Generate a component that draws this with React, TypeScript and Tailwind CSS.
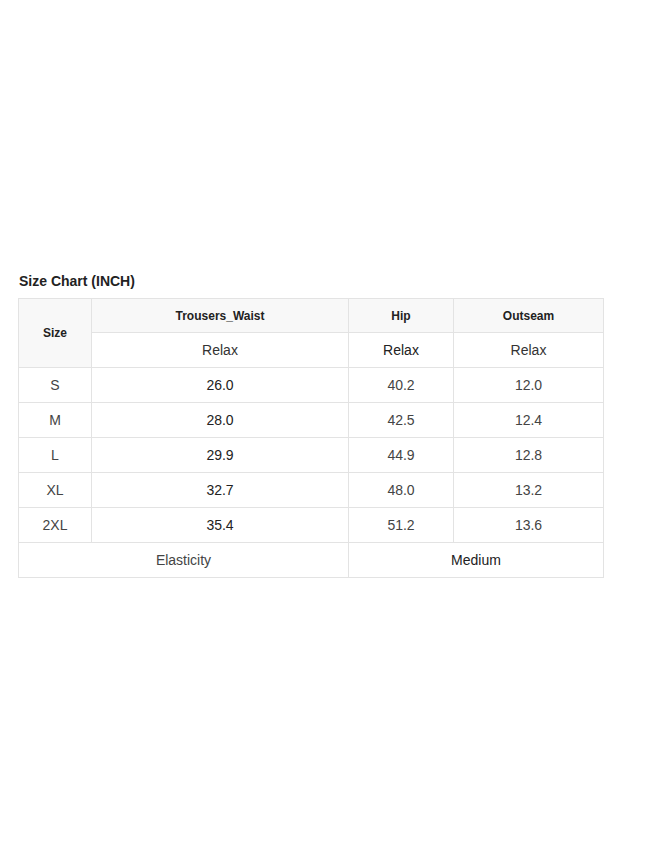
import React from "react";

const rows = [
  ["S", "26.0", "40.2", "12.0"],
  ["M", "28.0", "42.5", "12.4"],
  ["L", "29.9", "44.9", "12.8"],
  ["XL", "32.7", "48.0", "13.2"],
  ["2XL", "35.4", "51.2", "13.6"],
];

export default function App() {
  const cell = "border border-[#e3e3e3] text-center align-middle p-0";
  return (
    <div className="w-[651px] h-[868px] bg-white pt-[271px] pl-[18px]" style={{ fontFamily: '"Liberation Sans", Arial, sans-serif' }}>
      <div className="text-[14px] font-bold text-[#222] leading-[20px] pl-[1px] mb-[7px]">Size Chart (INCH)</div>
      <table className="border-collapse w-[585px] table-fixed">
        <colgroup>
          <col className="w-[73px]" />
          <col className="w-[257px]" />
          <col className="w-[105px]" />
          <col className="w-[150px]" />
        </colgroup>
        <tbody>
          <tr className="h-[34px] bg-[#f8f8f8]">
            <td rowSpan={2} className={`${cell} text-[12px] font-bold text-[#222]`}>Size</td>
            <td className={`${cell} text-[12px] font-bold text-[#222]`}>Trousers_Waist</td>
            <td className={`${cell} text-[12px] font-bold text-[#222]`}>Hip</td>
            <td className={`${cell} text-[12px] font-bold text-[#222]`}>Outseam</td>
          </tr>
          <tr className="h-[35px]">
            <td className={`${cell} text-[14px] text-[#333] bg-white`}>Relax</td>
            <td className={`${cell} text-[14px] text-[#222] bg-white`}>Relax</td>
            <td className={`${cell} text-[14px] text-[#333] bg-white`}>Relax</td>
          </tr>
          {rows.map((r) => (
            <tr key={r[0]} className="h-[35px]">
              <td className={`${cell} text-[14px] text-[#444]`}>{r[0]}</td>
              <td className={`${cell} text-[14px] text-[#222]`}>{r[1]}</td>
              <td className={`${cell} text-[14px] text-[#444]`}>{r[2]}</td>
              <td className={`${cell} text-[14px] text-[#444]`}>{r[3]}</td>
            </tr>
          ))}
          <tr className="h-[35px]">
            <td colSpan={2} className={`${cell} text-[14px] text-[#444]`}>Elasticity</td>
            <td colSpan={2} className={`${cell} text-[14px] text-[#222]`}>Medium</td>
          </tr>
        </tbody>
      </table>
    </div>
  );
}
